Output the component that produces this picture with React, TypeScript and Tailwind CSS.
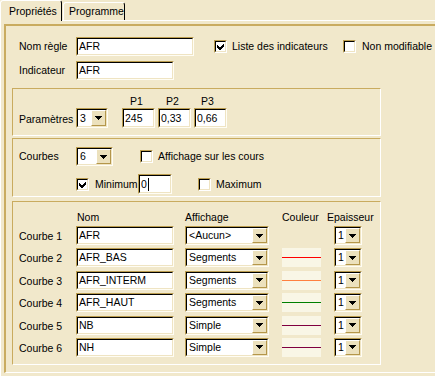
import React from 'react';

type Kids = { className?: string; children?: React.ReactNode };

// sunken 3D field: gold/black top-left, light bottom-right
const Sunken = ({ className = '', children }: Kids) => (
  <div className={`border-t border-l border-t-[#bb9d4f] border-l-[#bb9d4f] border-r border-b border-r-[#fffdf4] border-b-[#fffdf4] ${className}`}>
    <div className="flex h-full items-center border-t border-l border-t-black border-l-black border-r border-b border-r-[#efe4c3] border-b-[#efe4c3] bg-white">
      {children}
    </div>
  </div>
);

const Field = ({ className = '', text, caret }: { className?: string; text: string; caret?: boolean }) => (
  <Sunken className={className}>
    <span className="pl-[1px] whitespace-nowrap">{text}</span>
    {caret && <span className="ml-[1px] h-[13px] w-[1px] bg-black" />}
  </Sunken>
);

const Arrow = () => (
  <svg width="7" height="4" viewBox="0 0 7 4" shapeRendering="crispEdges">
    <polygon points="0,0 7,0 3.5,4" fill="#000" />
  </svg>
);

const Select = ({ className = '', text }: { className?: string; text: string }) => (
  <Sunken className={className}>
    <span className="flex-1 pl-[2px] whitespace-nowrap overflow-hidden">{text}</span>
    <div className="flex h-full w-[15px] items-center justify-center border-t border-l border-t-white border-l-white border-r border-b border-r-[#b4964a] border-b-[#b4964a] bg-[#ece1bd]">
      <Arrow />
    </div>
  </Sunken>
);

const Check = ({ checked }: { checked?: boolean }) => (
  <div className="h-[13px] w-[13px] shrink-0 border-t border-l border-t-[#bb9d4f] border-l-[#bb9d4f] border-r border-b border-r-white border-b-white">
    <div className="flex h-full w-full items-center justify-center border-t border-l border-t-black border-l-black border-r border-b border-r-[#efe4c3] border-b-[#efe4c3] bg-white">
      {checked && (
        <svg width="7" height="7" viewBox="0 0 7 7" shapeRendering="crispEdges">
          <polygon points="0,2 2.5,4.5 7,0 7,3 3,7 2,7 0,5" fill="#000" />
        </svg>
      )}
    </div>
  </div>
);

// group frame inside the outer panel
const Group = ({ className = '', children }: Kids) => (
  <div className={`ml-[6px] w-[369px] border-t border-l border-t-[#c9ab5f] border-l-[#c9ab5f] border-r border-b border-r-white border-b-white ${className}`}>
    {children}
  </div>
);

const curves = [
  { name: 'AFR', mode: '<Aucun>', color: '' },
  { name: 'AFR_BAS', mode: 'Segments', color: '#ff0000' },
  { name: 'AFR_INTERM', mode: 'Segments', color: '#ff8040' },
  { name: 'AFR_HAUT', mode: 'Segments', color: '#008000' },
  { name: 'NB', mode: 'Simple', color: '#800040' },
  { name: 'NH', mode: 'Simple', color: '#800040' },
];

export default function App() {
  return (
    <div className="h-[376px] w-[435px] overflow-hidden bg-[#f1e8cb] font-['Liberation_Sans',Arial,sans-serif] text-[10.5px] leading-[13px] text-black">
      {/* tabs */}
      <div className="flex h-[20px] items-end">
        <div className="relative z-10 -mb-[1px] h-[21px] w-[62px] rounded-t-[3px] border-t border-l border-t-white border-l-white border-r border-r-black bg-[#f1e8cb] pl-[8px] pt-[4px]">
          Propriétés
        </div>
        <div className="ml-[1px] h-[18px] w-[62px] rounded-t-[3px] border-t border-l border-t-white border-l-white border-r border-r-black pl-[5px] pt-[2px]">
          Programme
        </div>
      </div>

      {/* tab page */}
      <div className="h-[356px] border-t border-l border-t-white border-l-white pl-[3px] pt-[3px]">
        <div className="h-[349px] border-t-2 border-l-2 border-t-[#c9ab5f] border-l-[#c9ab5f] border-b border-b-white">
          {/* rule name / indicator */}
          <div className="h-[62px] pl-[13px] pt-[11px]">
            <div className="flex h-[19px] items-center">
              <span className="w-[57px]">Nom règle</span>
              <Field className="h-[19px] w-[118px]" text="AFR" />
              <div className="ml-[20px] flex w-[129px] items-center gap-[5px]">
                <Check checked />
                <span>Liste des indicateurs</span>
              </div>
              <div className="flex items-center gap-[6px]">
                <Check />
                <span className="whitespace-nowrap">Non modifiable</span>
              </div>
            </div>
            <div className="mt-[5px] flex h-[19px] items-center">
              <span className="w-[57px]">Indicateur</span>
              <Field className="h-[19px] w-[98px]" text="AFR" />
            </div>
          </div>

          {/* parameters */}
          <Group className="h-[48px] pl-[6px] pt-[6px]">
            <div className="flex pl-[109px]">
              <span className="w-[36px] pl-[2px]">P1</span>
              <span className="w-[36px] pl-[2px]">P2</span>
              <span className="w-[36px] pl-[1px]">P3</span>
            </div>
            <div className="flex h-[20px] items-center">
              <span className="w-[57px] pt-[2px]">Paramètres</span>
              <Select className="h-[20px] w-[32px]" text="3" />
              <div className="ml-[14px] flex gap-[3px]">
                <Field className="h-[20px] w-[33px]" text="245" />
                <Field className="h-[20px] w-[33px]" text="0,33" />
                <Field className="h-[20px] w-[33px]" text="0,66" />
              </div>
            </div>
          </Group>

          {/* curves count */}
          <Group className="mt-[2px] h-[59px] pl-[6px] pt-[8px]">
            <div className="flex h-[19px] items-center">
              <span className="w-[57px]">Courbes</span>
              <Select className="h-[19px] w-[37px]" text="6" />
              <div className="ml-[27px] flex items-center gap-[5px]">
                <Check />
                <span>Affichage sur les cours</span>
              </div>
            </div>
            <div className="mt-[8px] flex h-[20px] items-center pl-[57px]">
              <Check checked />
              <span className="ml-[6px] w-[43px]">Minimum</span>
              <Field className="h-[20px] w-[34px]" text="0" caret />
              <div className="ml-[26px] flex items-center gap-[5px]">
                <Check />
                <span>Maximum</span>
              </div>
            </div>
          </Group>

          {/* curves table */}
          <Group className="mt-[4px] h-[164px] pl-[6px] pt-[9px]">
            <div className="flex h-[13px]">
              <span className="w-[58px]" />
              <span className="w-[108px]">Nom</span>
              <span className="w-[97px]">Affichage</span>
              <span className="w-[45px]">Couleur</span>
              <span>Epaisseur</span>
            </div>
            <div className="mt-[2px] flex flex-col gap-[3.4px]">
              {curves.map((c, i) => (
                <div key={i} className="flex h-[19px] items-center">
                  <span className="w-[57px] pt-[2px]">Courbe {i + 1}</span>
                  <Field className="h-[19px] w-[98px]" text={c.name} />
                  <Select className="ml-[11px] h-[19px] w-[84px]" text={c.mode} />
                  <div className="ml-[13px] flex h-[19px] w-[39px] items-center">
                    {c.color && (
                      <div className="flex h-full w-full items-center bg-[#f9f6e6]">
                        <div className="h-[1px] w-full" style={{ backgroundColor: c.color }} />
                      </div>
                    )}
                  </div>
                  <Select className="ml-[13px] h-[19px] w-[28px]" text="1" />
                </div>
              ))}
            </div>
          </Group>
        </div>
      </div>
    </div>
  );
}
